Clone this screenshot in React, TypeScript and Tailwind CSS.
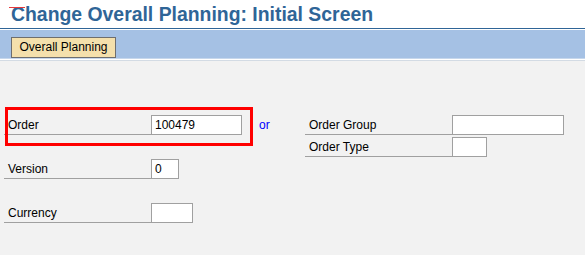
import React from "react";

const font = { fontFamily: '"Liberation Sans", Arial, sans-serif' };

function Field({ label, value, width }: { label: string; value?: string; width: string }) {
  return (
    <div className="flex items-end">
      <div className="w-[147px] h-[20px] border-b border-[#a0a0a0] pl-[4px] pt-px text-[12px] leading-[19px] text-black">
        {label}
      </div>
      <div className={`${width} h-[20px] border border-[#a0a0a0] bg-white pl-[3px] pt-px text-[12px] leading-[17px] text-black`}>
        {value}
      </div>
    </div>
  );
}

export default function App() {
  return (
    <div className="min-h-screen w-full bg-[#f2f2f2] relative overflow-hidden" style={font}>
      {/* Title bar */}
      <div className="relative h-[29px] bg-white border-b border-[#2f6597] pl-[11px] pt-[3px]">
        <h1 className="text-[19.4px] leading-[22px] font-bold text-[#2f6597] whitespace-nowrap">
          Change Overall Planning: Initial Screen
        </h1>
        <span className="absolute left-[9px] top-[7px] w-[16px] h-px bg-[#e8383a]" />
      </div>

      {/* Toolbar */}
      <div className="h-px bg-white" />
      <div className="h-[28px] bg-[#a5c1e4] pl-[11px] pt-[4px]">
        <button className="w-[105px] h-[21px] bg-[#f4e0ac] border border-[#6e6e6e] text-[12px] leading-[19px] text-black text-center">
          Overall Planning
        </button>
      </div>
      <div className="h-px bg-[#c6d7ec]" />
      <div className="h-px bg-white" />
      <div className="h-px bg-[#d3dbe4]" />

      {/* Selection screen */}
      <div className="pl-[4px] pt-[54px]">
        <div className="flex items-start">
          <div className="relative">
            <Field label="Order" value="100479" width="w-[91px]" />
            <div className="absolute left-[1px] -top-[8px] w-[248px] h-[39px] border-[3px] border-[#ff0000] pointer-events-none" />
          </div>
          <span className="ml-[17px] w-[46px] h-[20px] pt-px text-[12px] leading-[19px] text-[#0000ff]">or</span>
          <div className="flex flex-col gap-[2px]">
            <Field label="Order Group" width="w-[112px]" />
            <Field label="Order Type" width="w-[35px]" />
          </div>
        </div>
        <div className="mt-[2px]">
          <Field label="Version" value="0" width="w-[28px]" />
        </div>
        <div className="mt-[24px]">
          <Field label="Currency" width="w-[42px]" />
        </div>
      </div>
    </div>
  );
}
